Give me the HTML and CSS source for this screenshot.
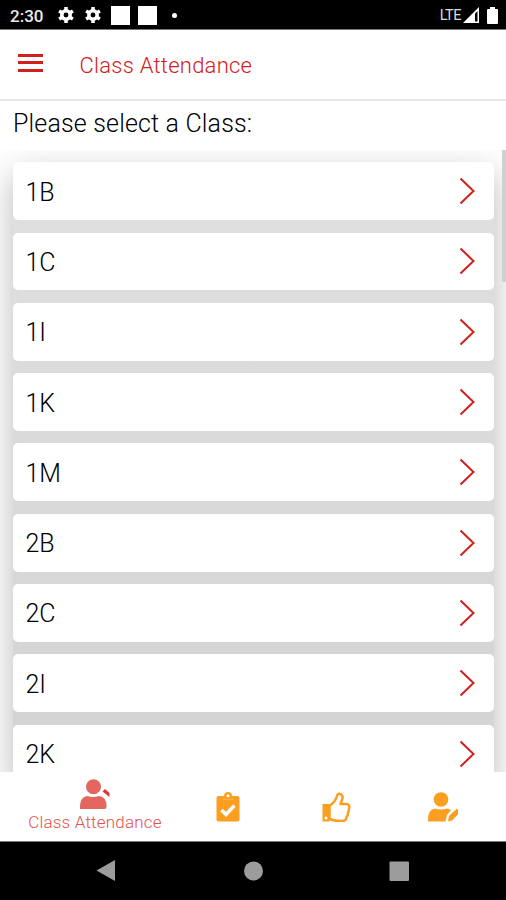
FILE: index.html
```
<!DOCTYPE html>
<html lang="en">

<head>
    <meta charset="UTF-8">
    <meta name="viewport" content="width=device-width, initial-scale=1.0">
    <title>Class Attendance</title>
    <link rel="stylesheet" href="styles.css">
</head>

<body>
    <!-- Status bar -->
    <div class="status">
        <span class="time">2:30</span>
        <svg class="gear" viewBox="0 0 16 16"><circle cx="8" cy="8" r="4.2" /><path d="M8 0v16M1.1 4l13.8 8M1.1 12l13.8-8" /></svg>
        <svg class="gear" viewBox="0 0 16 16"><circle cx="8" cy="8" r="4.2" /><path d="M8 0v16M1.1 4l13.8 8M1.1 12l13.8-8" /></svg>
        <span class="square"></span>
        <span class="square"></span>
        <span class="dot"></span>
        <span class="lte">LTE</span>
        <svg class="signal" width="16" height="16" viewBox="0 0 16 16"><path fill="#fff" fill-rule="evenodd" d="M0 16L16 0v16zM12 6.5V14.5h2.5V4z" /></svg>
        <svg class="battery" width="11" height="17" viewBox="0 0 11 17"><path fill="#fff" d="M3 0h5v2h2q1 0 1 1v13q0 1-1 1H1q-1 0-1-1V3q0-1 1-1h2z" /></svg>
    </div>

    <header class="header">
        <div class="menu">
            <span></span>
            <span></span>
            <span></span>
        </div>
        <h1>Class Attendance</h1>
    </header>

    <h2 class="prompt">Please select a Class:</h2>

    <!-- Class list -->
    <div class="list">
        <div class="rows">
            <div class="item">1B <svg viewBox="0 0 16 28"><path d="M1.5 1.5L14.5 14L1.5 26.5" /></svg></div>
            <div class="item">1C <svg viewBox="0 0 16 28"><path d="M1.5 1.5L14.5 14L1.5 26.5" /></svg></div>
            <div class="item">1I <svg viewBox="0 0 16 28"><path d="M1.5 1.5L14.5 14L1.5 26.5" /></svg></div>
            <div class="item">1K <svg viewBox="0 0 16 28"><path d="M1.5 1.5L14.5 14L1.5 26.5" /></svg></div>
            <div class="item">1M <svg viewBox="0 0 16 28"><path d="M1.5 1.5L14.5 14L1.5 26.5" /></svg></div>
            <div class="item">2B <svg viewBox="0 0 16 28"><path d="M1.5 1.5L14.5 14L1.5 26.5" /></svg></div>
            <div class="item">2C <svg viewBox="0 0 16 28"><path d="M1.5 1.5L14.5 14L1.5 26.5" /></svg></div>
            <div class="item">2I <svg viewBox="0 0 16 28"><path d="M1.5 1.5L14.5 14L1.5 26.5" /></svg></div>
            <div class="item">2K <svg viewBox="0 0 16 28"><path d="M1.5 1.5L14.5 14L1.5 26.5" /></svg></div>
        </div>
        <div class="scrollbar"></div>
    </div>

    <!-- Tabs -->
    <nav class="tabs">
        <div class="tab active">
            <svg width="32" height="31" viewBox="0 0 32 31">
                <circle cx="14.5" cy="7.7" r="7.5" />
                <path d="M1 30q-.6-12 7-13 6 2 12 0 8 1 7.5 11 0 2-2 2z" />
                <path class="tip" d="M23.500 12.500l2.500-2.500 4.500 4v4z" />
            </svg>
            <span>Class Attendance</span>
        </div>
        <div class="tab clipboard">
            <svg width="24" height="30" viewBox="0 0 24 30">
                <path fill-rule="evenodd" d="M2.5 4H8a4 4 0 0 1 8 0h5.500Q23.500 4 23.500 6v21.500q0 2-2 2h-19q-2 0-2-2V6Q.5 4 2.500 4zM12 2.200a1.500 1.500 0 1 0 .01 0z" />
                <path class="check" d="M5.500 18l4.500 4.500 8.500-9" />
                <path class="clip" d="M7 7.500h10" />
            </svg>
        </div>
        <div class="tab thumb">
            <svg width="29" height="30" viewBox="0 0 29 30">
                <path fill-rule="evenodd" d="M.5 12h7v17.500h-7zM4 24.500a1.500 1.500 0 1 0 .01 0z" />
                <path class="line" d="M7.500 14C11.500 11 14 8 15 4c.5-2 1.500-2.500 3-2 3 1 3 3 2 6l-1.500 4H24c3 0 4 2 3 4.500 0 2-.5 3-1 4.500 0 2-.5 3-1.500 4 0 3-2 4-5 4-5 0-8-.5-12-2z" />
            </svg>
        </div>
        <div class="tab edit">
            <svg width="32" height="30" viewBox="0 0 32 30">
                <circle cx="14" cy="7.500" r="7.300" />
                <path d="M1 29.500q-.8-12 7-13 6 2 12 0 2 0 4 1.500l-4 5-1.500 6.500z" />
                <path d="M21 29.500l1-5.500 8-7.500 1 1v5l-6 6z" />
            </svg>
        </div>
    </nav>

    <!-- System navigation -->
    <footer class="system">
        <svg width="506" height="58" viewBox="0 0 506 58">
            <path d="M96.500 28.500L115 18v21z" />
            <circle cx="253.500" cy="29" r="9.500" />
            <rect x="389.500" y="19.500" width="19.500" height="19.500" rx="1" />
        </svg>
    </footer>
</body>

</html>
```
FILE: styles.css
```
* {
    box-sizing: border-box;
    padding: 0;
    margin: 0;
}

body {
    width: 506px;
    height: 900px;
    overflow: hidden;
    display: flex;
    flex-direction: column;
    background-color: #fff;
    font-family: Roboto, sans-serif;
    color: #000;
}

.status {
    height: 30px;
    flex-shrink: 0;
    display: flex;
    align-items: center;
    padding: 1px 8px 0 10px;
    background-color: #000;
    color: #fff;
    border-bottom: 1px solid #777;
}

.time {
    width: 48px;
    padding-top: 1px;
    font-size: 17px;
    font-weight: 500;
    color: #e8e8e8;
}

.gear {
    width: 16px;
    height: 16px;
    margin-right: 11px;
    fill: none;
    stroke: #fff;
    stroke-width: 3.5;
}

.gear path {
    stroke-dasharray: 3 10;
}

.square {
    width: 19px;
    height: 19px;
    margin: 0 9px 0 -1px;
    background-color: #fff;
}

.dot {
    width: 5px;
    height: 5px;
    margin-left: 6px;
    border-radius: 50%;
    background-color: #fff;
}

.lte {
    margin-left: auto;
    font-size: 14.5px;
    letter-spacing: -0.5px;
    color: #ddd;
}

.signal {
    margin: 0 8px 0 2px;
}

.header {
    height: 71px;
    flex-shrink: 0;
    display: flex;
    align-items: center;
    padding-left: 17.5px;
    border-bottom: 2px solid #e8e8e8;
}

.menu {
    display: flex;
    flex-direction: column;
    gap: 4.5px;
    margin: -4px 37px 0 0;
}

.menu span {
    width: 25px;
    height: 3px;
    background-color: #d3201d;
}

.header h1 {
    padding-top: 2px;
    font-size: 22px;
    font-weight: 350;
    letter-spacing: 0.25px;
    color: #d3201d;
}

.prompt {
    height: 49px;
    flex-shrink: 0;
    padding-left: 13px;
    line-height: 45px;
    font-size: 25px;
    font-weight: 350;
    letter-spacing: 0.17px;
}

.list {
    position: relative;
    height: 622px;
    flex-shrink: 0;
    overflow: hidden;
    padding: 12.3px 12px 0 13px;
}

.rows {
    display: flex;
    flex-direction: column;
    gap: 12.5px;
    border-radius: 5px;
    background: linear-gradient(#e0e0e0, #d3d3d3);
    box-shadow: 0 12px 34px rgba(0, 0, 0, 0.28);
}

.item {
    height: 57.8px;
    flex-shrink: 0;
    display: flex;
    align-items: center;
    justify-content: space-between;
    padding: 2px 19px 0 12.5px;
    border-radius: 5px;
    background-color: #fff;
    font-size: 25px;
    font-weight: 350;
}

.item svg {
    width: 16px;
    height: 28px;
    margin-top: -2px;
    fill: none;
    stroke: #d3201d;
    stroke-width: 2;
}

.scrollbar {
    position: absolute;
    top: 0;
    right: 0;
    width: 4px;
    height: 132px;
    background-color: #d0d0d0;
}

.tabs {
    height: 70px;
    flex-shrink: 0;
    display: grid;
    grid-template-columns: 190px 76px 141px 99px;
    border-bottom: 1px solid #777;
    background-color: #fff;
}

.tab {
    display: flex;
    flex-direction: column;
    align-items: center;
    padding-top: 20px;
    fill: #fc9f20;
}

.tab.active {
    padding-top: 6.5px;
    fill: #e3665f;
    color: #e3524c;
    font-size: 17px;
    font-weight: 300;
    letter-spacing: 0.2px;
}

.active .tip {
    fill: #da3a33;
}

.active span {
    line-height: 25px;
}

.check {
    fill: none;
    stroke: #fff;
    stroke-width: 3.5;
}

.clip {
    stroke: #fdb450;
    stroke-width: 1;
}

.thumb .line {
    fill: none;
    stroke: #fc9f20;
    stroke-width: 2.5;
    stroke-linejoin: round;
}

.edit {
    padding-right: 28px;
}

.system {
    height: 58px;
    flex-shrink: 0;
    background-color: #000;
    fill: #9c9c9c;
}
```
